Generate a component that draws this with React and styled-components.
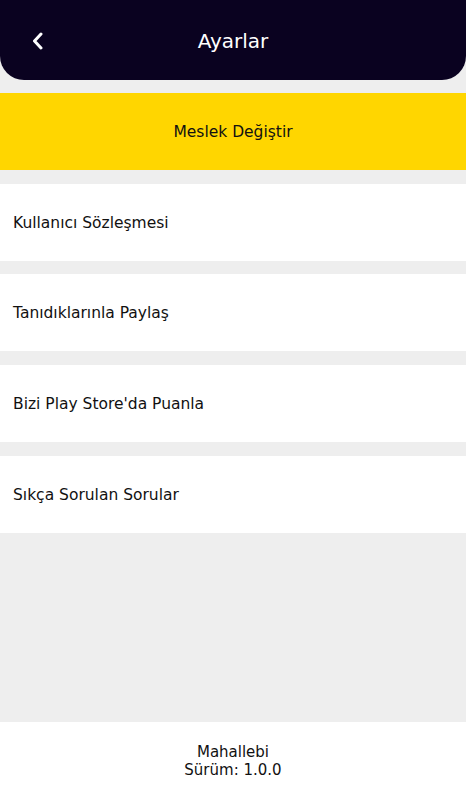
import React from "react";
import styled, { createGlobalStyle } from "styled-components";

const GlobalStyle = createGlobalStyle`
  body {
    margin: 0;
    background: #eeeeee;
    font-family: "DejaVu Sans", "Noto Sans", sans-serif;
  }
`;

const items = [
  "Kullanıcı Sözleşmesi",
  "Tanıdıklarınla Paylaş",
  "Bizi Play Store'da Puanla",
  "Sıkça Sorulan Sorular",
];

const App = () => {
  return (
    <Page>
      <GlobalStyle />
      <Header>
        <Back aria-label="back">
          <svg width="14" height="18" viewBox="0 0 14 18">
            <path
              d="M10 2 L3.5 9 L10 16"
              fill="none"
              stroke="white"
              strokeWidth="3"
              strokeLinecap="round"
              strokeLinejoin="round"
            />
          </svg>
        </Back>
        <Title>Ayarlar</Title>
      </Header>
      <Content>
        <Row highlight center>
          Meslek Değiştir
        </Row>
        {items.map((item) => (
          <Row key={item}>{item}</Row>
        ))}
      </Content>
      <Footer>
        <span>Mahallebi</span>
        <span>Sürüm: 1.0.0</span>
      </Footer>
    </Page>
  );
};

export default App;

const Page = styled.div`
  min-height: 800px;
  display: flex;
  flex-direction: column;
  background: #eeeeee;
`;

const Header = styled.div`
  height: 80px;
  background: #0a0220;
  border-radius: 0 0 24px 24px;
  position: relative;
  display: flex;
  align-items: center;
  justify-content: center;
`;

const Back = styled.div`
  position: absolute;
  left: 31px;
  top: 32px;
  width: 14px;
  height: 18px;
  display: flex;
`;

const Title = styled.span`
  color: white;
  font-size: 20px;
  font-weight: 500;
  margin-top: 2px;
`;

const Content = styled.div`
  flex: 1;
  display: flex;
  flex-direction: column;
  gap: 13.7px;
  padding-top: 13px;
`;

const Row = styled.div`
  height: 77px;
  background: ${(p) => (p.highlight ? "#ffd600" : "#ffffff")};
  display: flex;
  align-items: center;
  justify-content: ${(p) => (p.center ? "center" : "flex-start")};
  padding: 0 13px;
  padding-top: 1px;
  box-sizing: border-box;
  color: #111;
  font-size: 15.5px;
`;

const Footer = styled.div`
  height: 78px;
  background: white;
  display: flex;
  flex-direction: column;
  align-items: center;
  justify-content: center;
  color: #111;
  font-size: 15px;
  line-height: 18px;
`;
